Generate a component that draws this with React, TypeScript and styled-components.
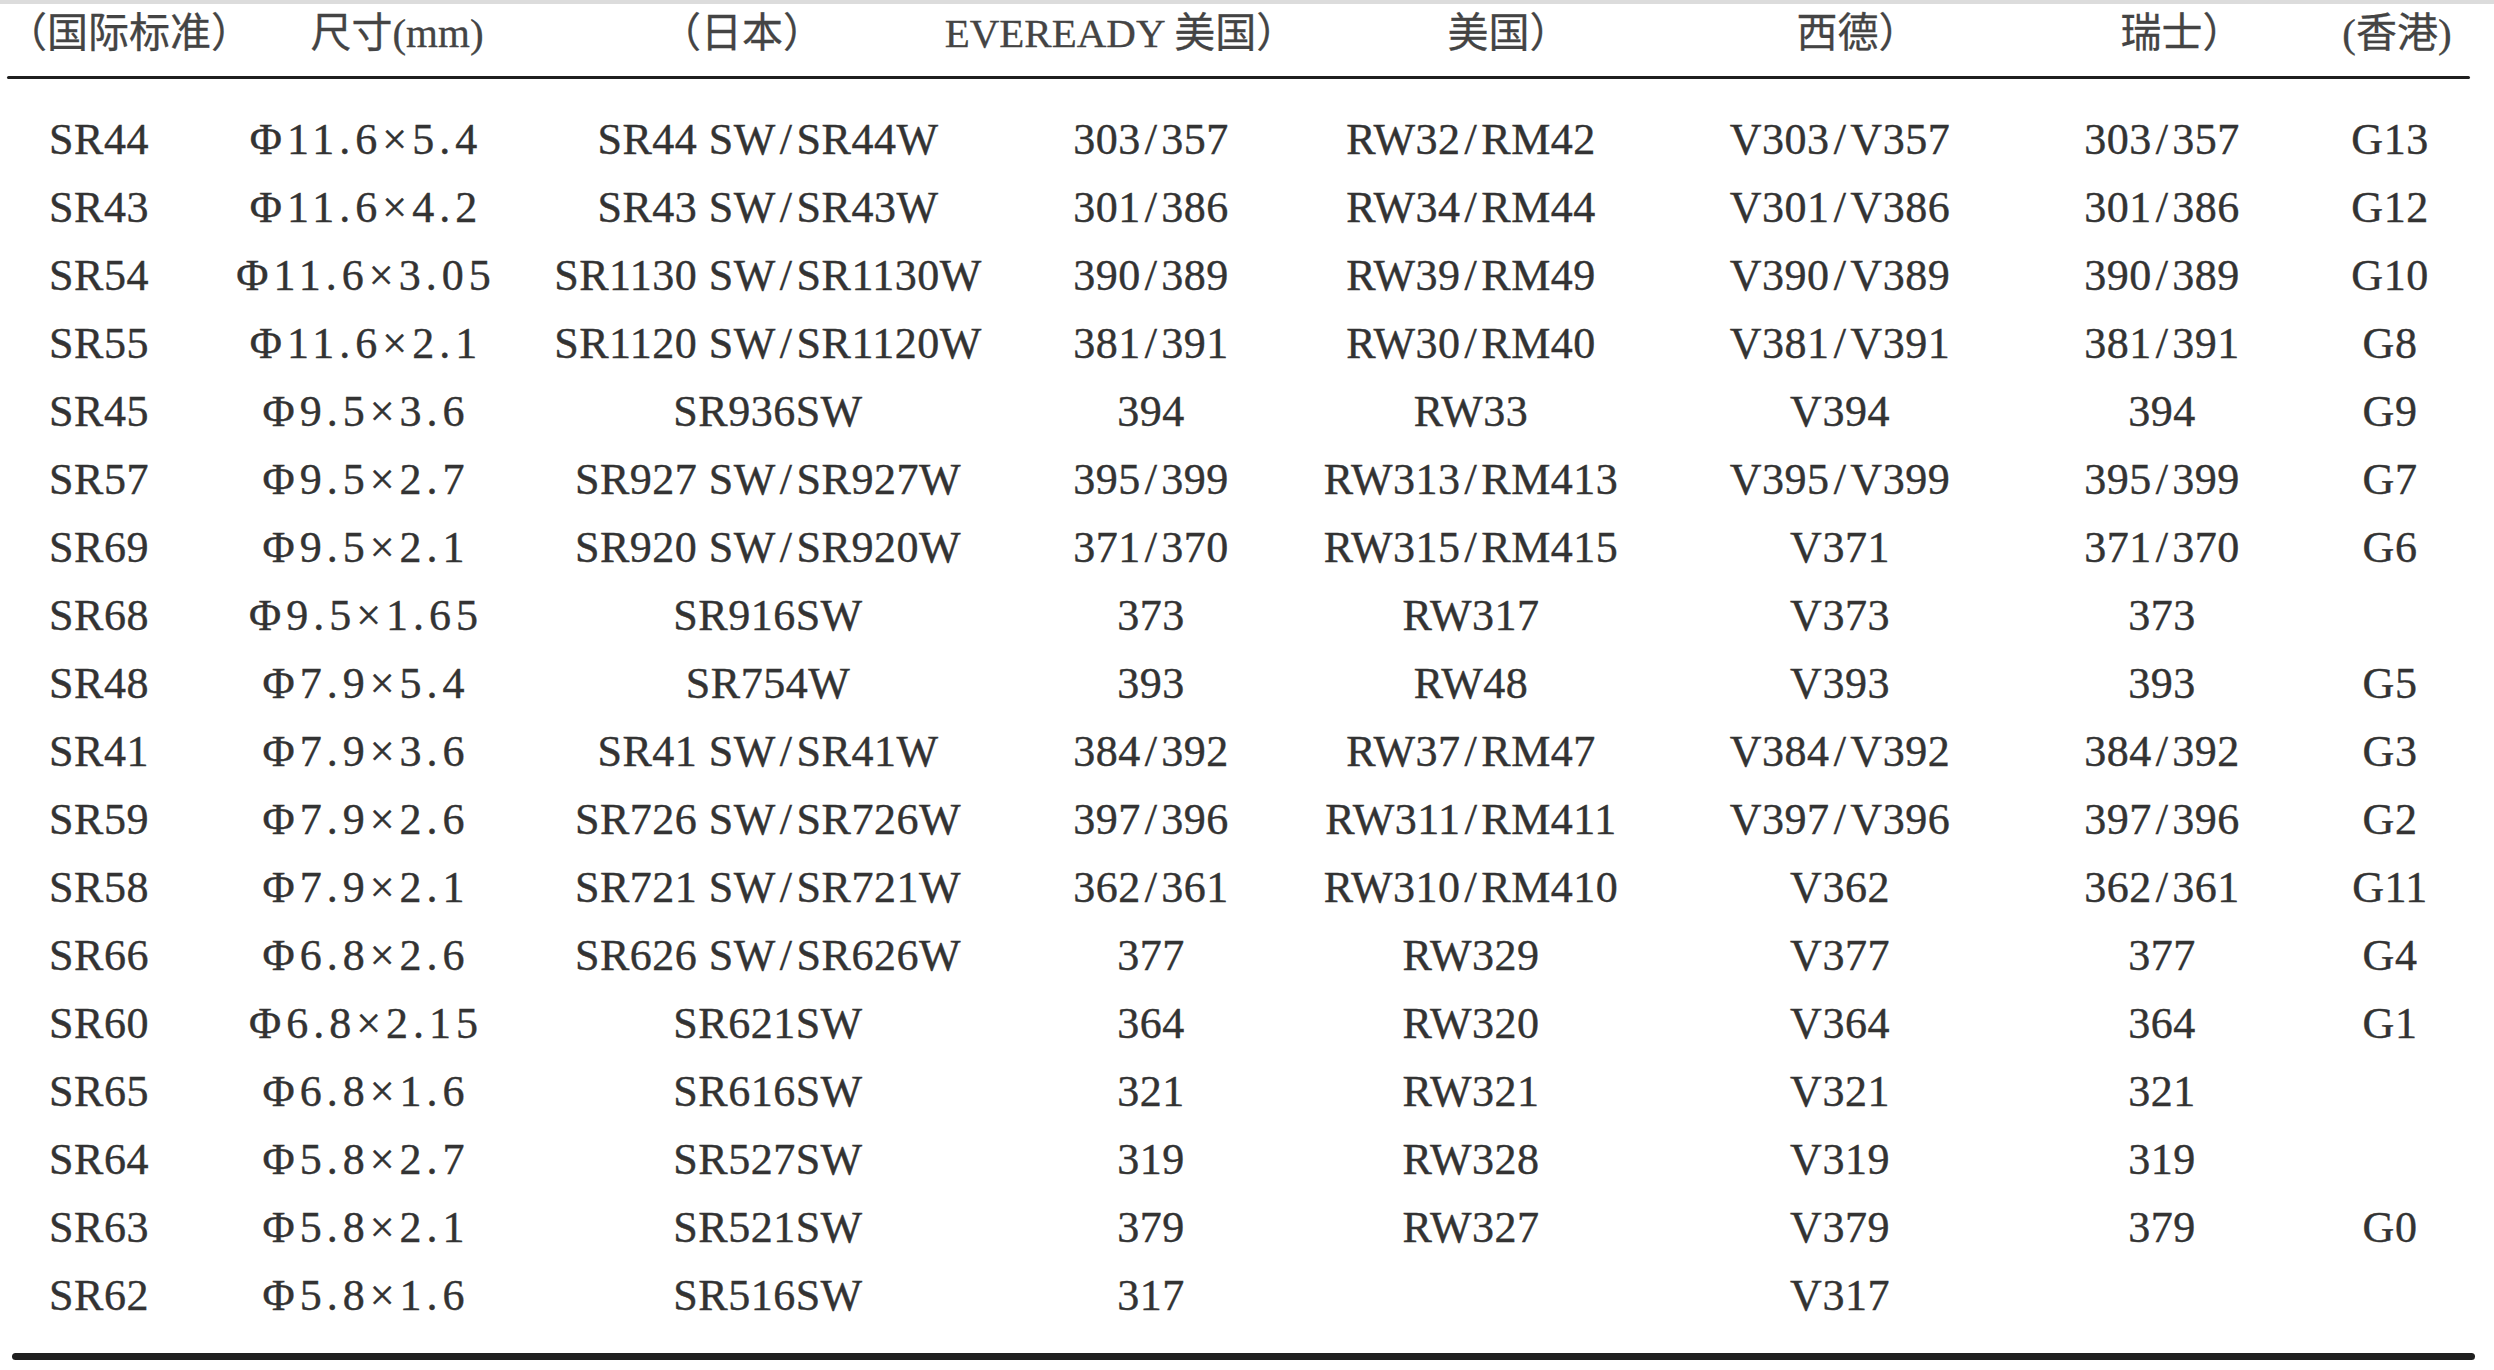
import styled, { createGlobalStyle } from "styled-components";

const GlobalStyle = createGlobalStyle`
  html, body {
    margin: 0;
    padding: 0;
    background: #ffffff;
  }
  body {
    overflow: hidden;
  }
`;

const COLUMNS = "198px 336px 468px 298px 342px 396px 248px 208px";

const Page = styled.div`
  width: 2494px;
  height: 1370px;
  background: #ffffff;
  font-family: "Liberation Serif", "Noto Sans CJK SC", serif;
`;

const TopStrip = styled.div`
  height: 4px;
  background: #dcdcdc;
`;

const HeadRow = styled.div`
  display: grid;
  grid-template-columns: ${COLUMNS};
  height: 59px;
  margin-bottom: 13px;
  align-items: center;
`;

const HeadCell = styled.div<{ $shift: number }>`
  display: flex;
  justify-content: center;
  min-width: 0;
  white-space: nowrap;
  padding-left: ${(p) => (p.$shift > 0 ? p.$shift * 2 : 0)}px;
  padding-right: ${(p) => (p.$shift < 0 ? -p.$shift * 2 : 0)}px;
  font-size: 41px;
  line-height: 1;
  color: #444444;
  -webkit-text-stroke: 0.3px #444444;
`;

const Rule = styled.div<{ $thick: number; $left: number; $right: number }>`
  height: ${(p) => p.$thick}px;
  margin: 0 ${(p) => p.$right}px 0 ${(p) => p.$left}px;
  background: #1f1f1f;
  border-radius: ${(p) => p.$thick / 2}px;
`;

const Body = styled.div`
  padding: 27px 0 23px;
`;

const Row = styled.div`
  display: grid;
  grid-template-columns: ${COLUMNS};
  height: 68px;
  align-items: center;
`;

const Cell = styled.div<{ $wide?: boolean }>`
  display: flex;
  justify-content: center;
  min-width: 0;
  white-space: nowrap;
  font-size: 44px;
  line-height: 68px;
  color: #333333;
  -webkit-text-stroke: 0.4px #333333;
  letter-spacing: ${(p) => (p.$wide ? 5 : 0.5)}px;
`;

const Slash = styled.span`
  margin: 0 4px;
`;

const heads: [string, number][] = [
  ["（国际标准）", 30],
  ["尺寸(mm)", 31],
  ["（日本）", -26],
  ["EVEREADY 美国）", -30],
  ["美国）", 38],
  ["西德）", 18],
  ["瑞士）", 20],
  ["(香港)", 7],
];

const rows: string[][] = [
  ["SR44", "Φ11.6×5.4", "SR44 SW/SR44W", "303/357", "RW32/RM42", "V303/V357", "303/357", "G13"],
  ["SR43", "Φ11.6×4.2", "SR43 SW/SR43W", "301/386", "RW34/RM44", "V301/V386", "301/386", "G12"],
  ["SR54", "Φ11.6×3.05", "SR1130 SW/SR1130W", "390/389", "RW39/RM49", "V390/V389", "390/389", "G10"],
  ["SR55", "Φ11.6×2.1", "SR1120 SW/SR1120W", "381/391", "RW30/RM40", "V381/V391", "381/391", "G8"],
  ["SR45", "Φ9.5×3.6", "SR936SW", "394", "RW33", "V394", "394", "G9"],
  ["SR57", "Φ9.5×2.7", "SR927 SW/SR927W", "395/399", "RW313/RM413", "V395/V399", "395/399", "G7"],
  ["SR69", "Φ9.5×2.1", "SR920 SW/SR920W", "371/370", "RW315/RM415", "V371", "371/370", "G6"],
  ["SR68", "Φ9.5×1.65", "SR916SW", "373", "RW317", "V373", "373", ""],
  ["SR48", "Φ7.9×5.4", "SR754W", "393", "RW48", "V393", "393", "G5"],
  ["SR41", "Φ7.9×3.6", "SR41 SW/SR41W", "384/392", "RW37/RM47", "V384/V392", "384/392", "G3"],
  ["SR59", "Φ7.9×2.6", "SR726 SW/SR726W", "397/396", "RW311/RM411", "V397/V396", "397/396", "G2"],
  ["SR58", "Φ7.9×2.1", "SR721 SW/SR721W", "362/361", "RW310/RM410", "V362", "362/361", "G11"],
  ["SR66", "Φ6.8×2.6", "SR626 SW/SR626W", "377", "RW329", "V377", "377", "G4"],
  ["SR60", "Φ6.8×2.15", "SR621SW", "364", "RW320", "V364", "364", "G1"],
  ["SR65", "Φ6.8×1.6", "SR616SW", "321", "RW321", "V321", "321", ""],
  ["SR64", "Φ5.8×2.7", "SR527SW", "319", "RW328", "V319", "319", ""],
  ["SR63", "Φ5.8×2.1", "SR521SW", "379", "RW327", "V379", "379", "G0"],
  ["SR62", "Φ5.8×1.6", "SR516SW", "317", "", "V317", "", ""],
];

const renderValue = (text: string) => {
  const parts = text.split("/");
  if (parts.length < 2) return text;
  return (
    <>
      {parts[0]}
      <Slash>/</Slash>
      {parts[1]}
    </>
  );
};

export default function App() {
  return (
    <>
      <GlobalStyle />
      <Page>
        <TopStrip />
        <HeadRow>
          {heads.map(([label, shift], i) => (
            <HeadCell key={i} $shift={shift}>
              {label}
            </HeadCell>
          ))}
        </HeadRow>
        <Rule $thick={3} $left={7} $right={24} />
        <Body>
          {rows.map((row, r) => (
            <Row key={r}>
              {row.map((value, c) => (
                <Cell key={c} $wide={c === 1}>
                  {renderValue(value)}
                </Cell>
              ))}
            </Row>
          ))}
        </Body>
        <Rule $thick={7} $left={12} $right={19} />
      </Page>
    </>
  );
}
